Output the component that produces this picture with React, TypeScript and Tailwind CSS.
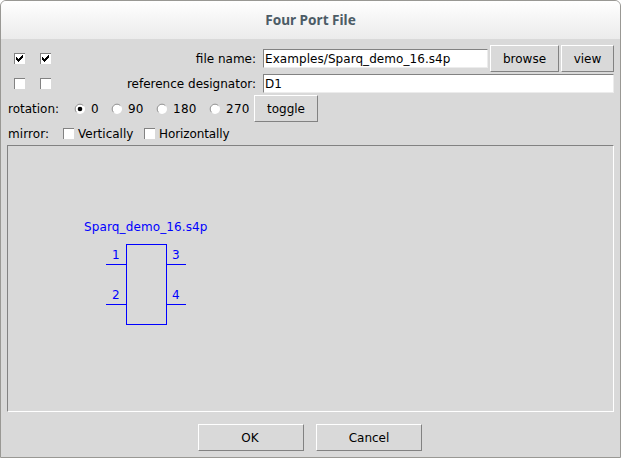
import React from "react";

const Check = ({ on = false }: { on?: boolean }) => (
  <span className="block size-[11px] shrink-0 border-t border-l border-[#828282] bg-white">
    {on && (
      <svg width="10" height="10" viewBox="0 0 10 10" shapeRendering="crispEdges" className="block">
        <path
          d="M1 3h1v3h-1zM2 4h1v3h-1zM3 5h1v3h-1zM4 4h1v3h-1zM5 3h1v3h-1zM6 2h1v3h-1zM7 1h1v3h-1z"
          fill="#000"
        />
      </svg>
    )}
  </span>
);

const Radio = ({ on = false }: { on?: boolean }) => (
  <svg width="10" height="10" viewBox="0 0 10 10" className="block shrink-0 overflow-visible">
    <circle cx="5" cy="5" r="5" fill="#fff" />
    <path d="M1.6 8.4A4.7 4.7 0 0 1 8.4 1.6" fill="none" stroke="#828282" strokeWidth="0.9" />
    {on && <circle cx="5" cy="5" r="2.3" fill="#000" />}
  </svg>
);

const Button = ({ className, children }: { className: string; children: React.ReactNode }) => (
  <button
    className={`h-[27px] shrink-0 border border-t-white border-l-white border-r-[#828282] border-b-[#828282] pt-px text-center leading-[25px] ${className}`}
  >
    {children}
  </button>
);

const Entry = ({ className, children }: { className: string; children: React.ReactNode }) => (
  <div
    className={`h-[19px] border border-t-[#828282] border-l-[#828282] border-r-[#ececec] border-b-[#ececec] bg-white pt-px pl-px leading-[17px] tracking-[0.06px] ${className}`}
  >
    {children}
  </div>
);

export default function App() {
  return (
    <div className="flex h-[458px] w-[621px] flex-col overflow-hidden rounded-t-[6px] border border-[#999894] bg-[#d9d9d9] font-['DejaVu_Sans',sans-serif] text-[12px] whitespace-nowrap text-black">
      <header className="h-[38px] shrink-0 bg-linear-to-b from-white to-[#ebebeb] text-center font-['Noto_Sans',sans-serif] text-[13.6px] leading-[38px] font-bold text-[#4c5c66]">
        Four Port File
      </header>
      <div className="mt-[6px] flex h-[27px] shrink-0 items-center pr-[6px] pl-[13px]">
        <Check on />
        <span className="w-[15px]" />
        <Check on />
        <span className="w-[205px] text-right">file name:</span>
        <Entry className="ml-[7px] w-[225px]">Examples/Sparq_demo_16.s4p</Entry>
        <Button className="ml-[2px] w-[69px]">browse</Button>
        <Button className="ml-[2px] w-[53px]">view</Button>
      </div>
      <div className="mt-[2px] flex h-[19px] shrink-0 items-center pr-[6px] pl-[13px]">
        <Check />
        <span className="w-[15px]" />
        <Check />
        <span className="w-[205px] text-right">reference designator:</span>
        <Entry className="ml-[7px] w-[351px]">D1</Entry>
      </div>
      <div className="mt-[2px] flex h-[27px] shrink-0 items-center pl-[7px]">
        <span className="w-[67px]">rotation:</span>
        <Radio on />
        <span className="w-[27px] pl-[6px]">0</span>
        <Radio />
        <span className="w-[35px] pl-[6px]">90</span>
        <Radio />
        <span className="w-[43px] pl-[6px] tracking-[0.3px]">180</span>
        <Radio />
        <span className="w-[34px] pl-[6px] tracking-[0.3px]">270</span>
        <Button className="w-[64px]">toggle</Button>
      </div>
      <div className="flex h-[23px] shrink-0 items-center pl-[7px]">
        <span className="w-[55px] tracking-[0.1px]">mirror:</span>
        <Check />
        <span className="w-[70px] pl-1">Vertically</span>
        <Check />
        <span className="pl-1 tracking-[-0.1px]">Horizontally</span>
      </div>
      <div className="mx-[6px] h-[267px] shrink-0 border border-t-[#828282] border-l-[#828282] border-r-white border-b-white">
        <svg width="605" height="265" viewBox="8 146 605 265" className="block">
          <g fill="none" stroke="#00f" shapeRendering="crispEdges">
            <rect x="126.5" y="244.5" width="40" height="80" />
            <path d="M106 264.5h20M106 304.5h20M167 264.5h19M167 304.5h19" />
          </g>
          <g fill="#00f" fontSize="12">
            <text x="84" y="231" letterSpacing="0.12">
              Sparq_demo_16.s4p
            </text>
            <text x="112" y="259">1</text>
            <text x="112" y="299">2</text>
            <text x="172" y="259">3</text>
            <text x="172" y="299">4</text>
          </g>
        </svg>
      </div>
      <div className="mt-[12px] flex gap-[12px] pl-[197px]">
        <Button className="w-[106px] pr-[2px]">OK</Button>
        <Button className="w-[106px]">Cancel</Button>
      </div>
    </div>
  );
}
